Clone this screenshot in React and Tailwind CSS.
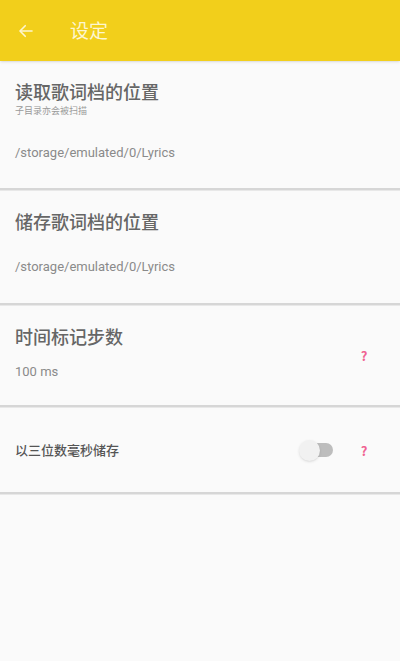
import { useState } from 'react';

function Help() {
  return <span className="text-[13px] font-bold text-[#f06292] leading-none">?</span>;
}

function Divider() {
  return <div className="h-[3px] bg-[#d6d6d6] border-b border-[#e8e8e8]" />;
}

export default function App() {
  const [millis, setMillis] = useState(false);

  return (
    <div
      className="w-[400px] h-[661px] bg-[#fafafa] flex flex-col"
      style={{ fontFamily: '"Noto Sans CJK SC", Roboto, sans-serif' }}
    >
      {/* 顶栏 */}
      <div className="h-[61px] bg-[#f2cf1b] flex items-center shadow-sm">
        <svg className="ml-[17px]" width="18" height="18" viewBox="0 0 24 24" fill="none" stroke="#fdf6d0" strokeWidth="2.2" strokeLinecap="round" strokeLinejoin="round">
          <path d="M20 12H5" />
          <path d="M11 5l-7 7 7 7" />
        </svg>
        <span className="ml-[35px] text-[19px] text-[#fdf6d0]">设定</span>
      </div>

      {/* 读取 */}
      <div className="h-[127px] px-[15px] pt-[17px]">
        <div className="text-[18px] leading-[26px] text-[#666] font-medium">读取歌词档的位置</div>
        <div className="text-[9px] leading-[12px] text-[#999] mt-[1px]">子目录亦会被扫描</div>
        <div
          className="text-[13px] text-[#8a8a8a] mt-[26px]"
          style={{ fontFamily: 'Roboto, sans-serif' }}
        >
          /storage/emulated/0/Lyrics
        </div>
      </div>
      <Divider />

      {/* 储存 */}
      <div className="h-[112px] px-[15px] pt-[17px]">
        <div className="text-[18px] leading-[26px] text-[#666] font-medium">储存歌词档的位置</div>
        <div
          className="text-[13px] text-[#8a8a8a] mt-[23px]"
          style={{ fontFamily: 'Roboto, sans-serif' }}
        >
          /storage/emulated/0/Lyrics
        </div>
      </div>
      <Divider />

      {/* 时间标记 */}
      <div className="h-[99px] px-[15px] flex items-center">
        <div className="flex-1 pb-[6px]">
          <div className="text-[18px] leading-[26px] text-[#666] font-medium">时间标记步数</div>
          <div
            className="text-[13px] text-[#8a8a8a] mt-[13px]"
            style={{ fontFamily: 'Roboto, sans-serif' }}
          >
            100 ms
          </div>
        </div>
        <div className="w-[10px] mr-[16px] flex justify-center">
          <Help />
        </div>
      </div>
      <Divider />

      {/* 三位数毫秒 */}
      <div className="h-[84px] px-[15px] flex items-center">
        <div className="flex-1 text-[13px] text-[#555] font-medium">以三位数毫秒储存</div>
        <button
          onClick={() => setMillis(!millis)}
          className="relative w-[34px] h-[21px] mr-[26px] flex items-center"
        >
          <span className={`absolute left-[3px] right-0 h-[14px] rounded-full ${millis ? 'bg-[#f7df7a]' : 'bg-[#bdbdbd]'}`} />
          <span
            className={`absolute top-0 w-[21px] h-[21px] rounded-full shadow ${millis ? 'left-[13px] bg-[#f2cf1b]' : 'left-0 bg-[#f1f1f1]'}`}
          />
        </button>
        <div className="w-[10px] mr-[16px] flex justify-center">
          <Help />
        </div>
      </div>
      <Divider />

      <div className="flex-1" />
    </div>
  );
}
